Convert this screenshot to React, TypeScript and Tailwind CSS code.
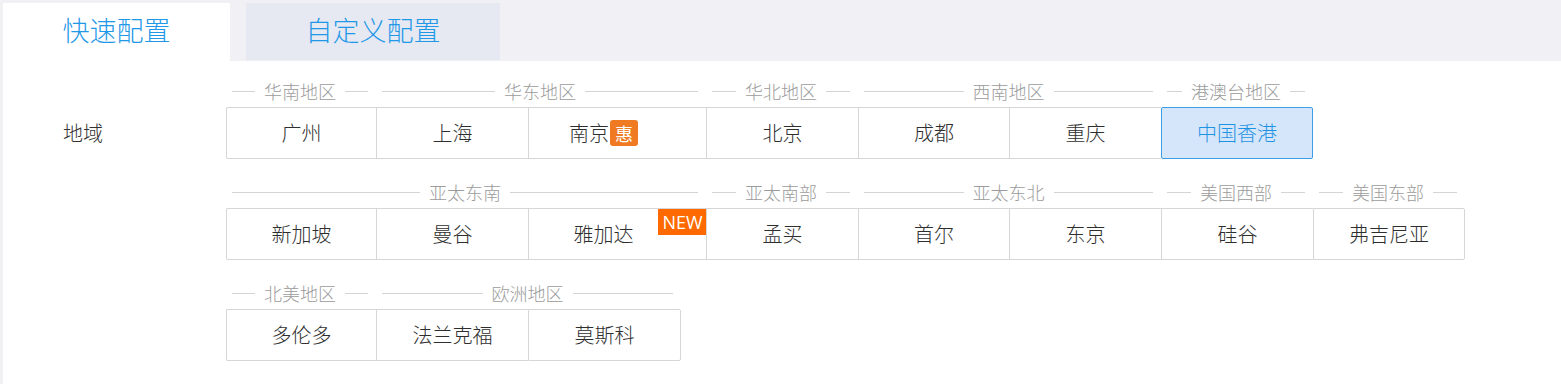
import React from "react";

type Cell = { name: string; w: number; badge?: "hui" | "new"; selected?: boolean; last?: boolean };
type Group = { title: string; cells: Cell[] };

const rows: Group[][] = [
  [
    { title: "华南地区", cells: [{ name: "广州", w: 150 }] },
    { title: "华东地区", cells: [{ name: "上海", w: 152 }, { name: "南京", w: 178, badge: "hui" }] },
    { title: "华北地区", cells: [{ name: "北京", w: 152 }] },
    { title: "西南地区", cells: [{ name: "成都", w: 151 }, { name: "重庆", w: 152 }] },
    { title: "港澳台地区", cells: [{ name: "中国香港", w: 152, selected: true, last: true }] },
  ],
  [
    { title: "亚太东南", cells: [{ name: "新加坡", w: 150 }, { name: "曼谷", w: 152 }, { name: "雅加达", w: 178, badge: "new" }] },
    { title: "亚太南部", cells: [{ name: "孟买", w: 152 }] },
    { title: "亚太东北", cells: [{ name: "首尔", w: 151 }, { name: "东京", w: 152 }] },
    { title: "美国西部", cells: [{ name: "硅谷", w: 152 }] },
    { title: "美国东部", cells: [{ name: "弗吉尼亚", w: 152, last: true }] },
  ],
  [
    { title: "北美地区", cells: [{ name: "多伦多", w: 150 }] },
    { title: "欧洲地区", cells: [{ name: "法兰克福", w: 152 }, { name: "莫斯科", w: 153, last: true }] },
  ],
];

function Heading({ title, width }: { title: string; width: number }) {
  return (
    <div className="flex items-center gap-[9px] pl-[6px] pr-[8px] h-[27px] pb-[5px]" style={{ width }}>
      <div className="flex-1 h-px bg-[#d4d4d4]" />
      <span className="text-[18px] leading-[24px] text-[#9b9b9b] whitespace-nowrap">{title}</span>
      <div className="flex-1 h-px bg-[#d4d4d4]" />
    </div>
  );
}

function CellBox({ c, first, lastInRow }: { c: Cell; first: boolean; lastInRow: boolean }) {
  let cls = "relative h-[52px] flex items-center justify-center text-[20px] shrink-0 ";
  if (c.badge) cls += "pr-[28px] ";
  if (c.selected) {
    cls += "border border-[#3a9de6] bg-[#d6e6fa] text-[#1f93e3] rounded-[2px] z-10";
  } else {
    cls += "border-y border-l border-[#d6d6d6] text-[#2e2e2e] ";
    if (lastInRow) cls += "border-r rounded-r-[2px] ";
    if (first) cls += "rounded-l-[2px] ";
  }
  return (
    <div className={cls} style={{ width: c.w }}>
      <span>{c.name}</span>
      {c.badge === "hui" && (
        <span className="ml-px w-[28px] h-[26px] rounded-[3px] bg-[#ef7a22] text-white text-[18px] leading-[26px] text-center font-normal">
          惠
        </span>
      )}
      {c.badge === "new" && (
        <span className="absolute top-0 right-[-1px] w-[49px] h-[26px] bg-[#ff6a00] text-white text-[18px] leading-[26px] text-center font-normal font-['Open_Sans',sans-serif]">
          NEW
        </span>
      )}
    </div>
  );
}

export default function App() {
  return (
    <div className="w-[1561px] h-[384px] bg-white font-['Noto_Sans_CJK_SC','Noto_Sans',sans-serif] font-light border-l-[3px] border-[#f1f1f4] overflow-hidden">
      <div className="h-[61px] bg-[#f0f0f5] pt-[3px] flex items-stretch">
        <div className="w-[227px] bg-white flex items-center justify-center text-[27px] text-[#1f98e8] pb-[3px]">
          快速配置
        </div>
        <div className="w-[16px]" />
        <div className="w-[254px] bg-[#e6e9f2] flex items-center justify-center text-[27px] text-[#1f98e8] pb-[3px] border-b border-[#eceef4]">
          自定义配置
        </div>
      </div>
      <div className="flex pt-[19px] pl-[60px]">
        <div className="w-[163px] shrink-0">
          <div className="mt-[27px] h-[52px] flex items-center text-[20px] text-[#333333]">地域</div>
        </div>
        <div className="flex flex-col gap-[22px]">
          {rows.map((groups, ri) => {
            const allCells = groups.flatMap((g) => g.cells);
            return (
              <div key={ri} className="flex flex-col">
                <div className="flex">
                  {groups.map((g) => (
                    <Heading key={g.title} title={g.title} width={g.cells.reduce((s, c) => s + c.w, 0)} />
                  ))}
                </div>
                <div className="flex">
                  {allCells.map((c, i) => (
                    <CellBox key={c.name} c={c} first={i === 0} lastInRow={i === allCells.length - 1} />
                  ))}
                </div>
              </div>
            );
          })}
        </div>
      </div>
    </div>
  );
}
